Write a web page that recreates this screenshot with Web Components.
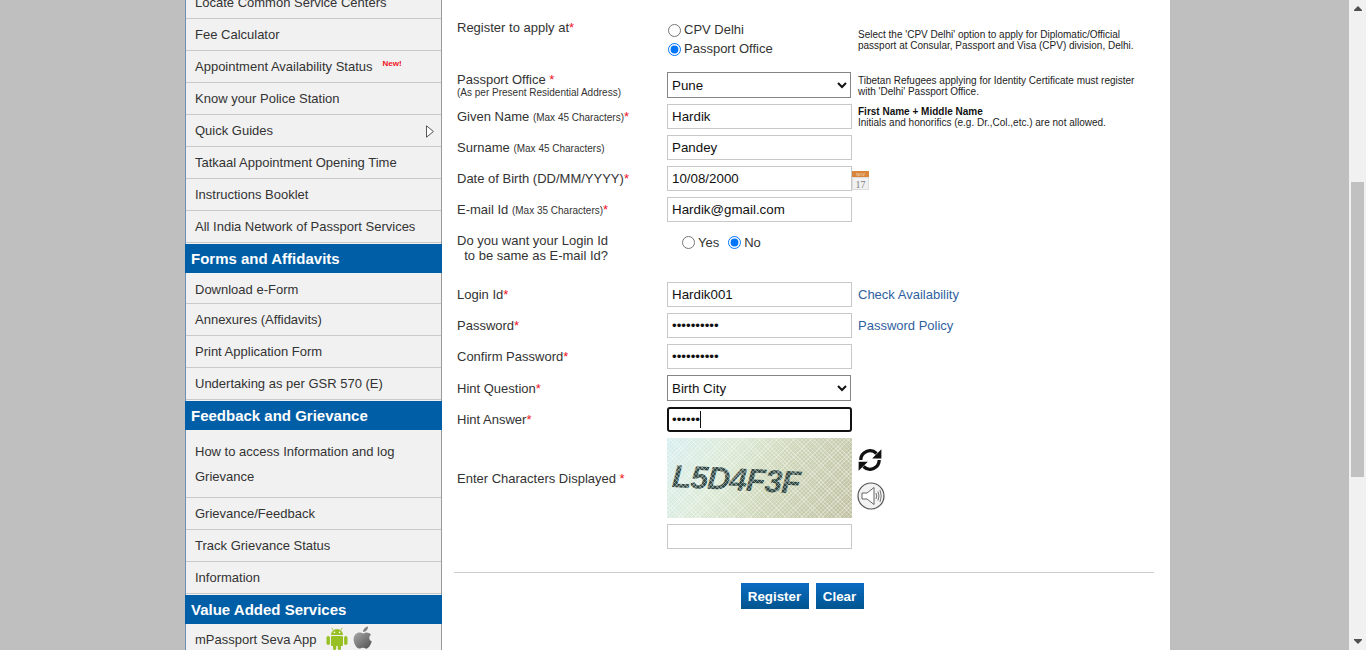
<!DOCTYPE html>
<html>
<head>
<meta charset="utf-8">
<title>Register</title>
<style>
    html, body { margin: 0; height: 650px; overflow: hidden; background: #bfbfbf; }
    body { display: flex; font-family: "Liberation Sans", Arial, sans-serif; }
</style>
</head>
<body>
<portal-page>
    <side-menu slot="side">
        <menu-row>Locate Common Service Centers</menu-row>
        <menu-row>Fee Calculator</menu-row>
        <menu-row new>Appointment Availability Status</menu-row>
        <menu-row>Know your Police Station</menu-row>
        <menu-row arrow>Quick Guides</menu-row>
        <menu-row>Tatkaal Appointment Opening Time</menu-row>
        <menu-row>Instructions Booklet</menu-row>
        <menu-row>All India Network of Passport Services</menu-row>
        <menu-head>Forms and Affidavits</menu-head>
        <menu-row style="--h:30px;--pt:4px">Download e-Form</menu-row>
        <menu-row>Annexures (Affidavits)</menu-row>
        <menu-row>Print Application Form</menu-row>
        <menu-row>Undertaking as per GSR 570 (E)</menu-row>
        <menu-head>Feedback and Grievance</menu-head>
        <menu-row tall>How to access Information and log Grievance</menu-row>
        <menu-row>Grievance/Feedback</menu-row>
        <menu-row>Track Grievance Status</menu-row>
        <menu-row>Information</menu-row>
        <menu-head>Value Added Services</menu-head>
        <menu-row apps>mPassport Seva App</menu-row>
    </side-menu>
    <register-form slot="main"></register-form>
</portal-page>
<page-scrollbar></page-scrollbar>

<script>
class PortalPage extends HTMLElement {
    constructor() {
        super();
        this.attachShadow({ mode: 'open' });
        this.shadowRoot.innerHTML = `
            <style>
                :host { display: flex; width: 1349px; height: 650px; overflow: hidden; }
                .wrap {
                    display: flex;
                    width: 985px;
                    height: 650px;
                    margin-left: 185px;
                    background: #fff;
                    overflow: hidden;
                }
            </style>
            <div class="wrap"><slot name="side"></slot><slot name="main"></slot></div>`;
    }
}

class SideMenu extends HTMLElement {
    constructor() {
        super();
        this.attachShadow({ mode: 'open' });
        this.shadowRoot.innerHTML = `
            <style>
                :host {
                    display: block;
                    box-sizing: border-box;
                    flex: none;
                    width: 257px;
                    height: 700px;
                    margin-top: -13px;
                    background: #f1f1f1;
                    border-left: 1px solid #6f8fb5;
                    border-right: 1px solid #999;
                    font: 13px/18px "Liberation Sans", Arial, sans-serif;
                    color: #333;
                }
            </style>
            <slot></slot>`;
    }
}

class MenuRow extends HTMLElement {
    constructor() {
        super();
        this.attachShadow({ mode: 'open' });
    }

    connectedCallback() {
        const tall = this.hasAttribute('tall');
        const badge = this.hasAttribute('new') ? '<span class="new">New!</span>' : '';
        const arrow = this.hasAttribute('arrow')
            ? '<svg class="arrow" width="8" height="13" viewBox="0 0 8 13"><path d="M.5 .8 L7.400 6.500 L.5 12.200 Z" fill="#fff" stroke="#555"/></svg>' : '';
        const apps = this.hasAttribute('apps') ? `
            <svg class="app" style="margin-left:10px" width="22" height="24" viewBox="0 0 22 24">
                <g fill="#97c024">
                    <path d="M5 9 a6 6 0 0 1 12 0 Z"/>
                    <rect x="5" y="10" width="12" height="10" rx="1"/>
                    <rect x="0.5" y="10" width="3.4" height="9" rx="1.7"/>
                    <rect x="18.1" y="10" width="3.4" height="9" rx="1.7"/>
                    <rect x="7" y="18" width="3.2" height="6" rx="1.6"/>
                    <rect x="11.8" y="18" width="3.2" height="6" rx="1.6"/>
                </g>
                <path d="M7 4 L5.8 1.8 M15 4 L16.2 1.8" stroke="#97c024" stroke-width=".8"/>
                <circle cx="8.4" cy="6.4" r=".8" fill="#fff"/><circle cx="13.6" cy="6.4" r=".8" fill="#fff"/>
            </svg>
            <svg class="app" style="margin-left:3px" width="24" height="24" viewBox="0 0 24 24">
                <defs><linearGradient id="ap" x1="0" y1="0" x2="1" y2="1"><stop offset="0" stop-color="#a8a8a8"/><stop offset="1" stop-color="#4f4f4f"/></linearGradient></defs>
                <path fill="url(#ap)" d="M12.500 7.500 C14.500 6 18 6 20 8.800 C17.600 10.400 17.600 14 20.800 15.400 C19.600 19 17.200 23 14.800 22.600 C13.600 22.400 12.800 21.800 11.600 21.800 C10.400 21.800 9.400 22.600 8.200 22.600 C5.600 22.600 2.600 17.600 2.600 13.600 C2.600 8.600 6.400 6 9.400 6.600 C10.800 6.900 11.400 7.500 12.500 7.500 Z"/>
                <path fill="#7d7d7d" d="M12 6 C12 3.400 14.400 1 17 .6 C17.200 3.400 14.800 6 12 6 Z"/>
            </svg>` : '';
        const height = tall ? '67px' : 'var(--h, 31px)';
        this.shadowRoot.innerHTML = `
            <style>
                :host {
                    display: block;
                    border-bottom: 1px solid #c9c9c9;
                }
                :host(:last-child) { border-bottom: 0; }
                .row {
                    display: flex;
                    align-items: ${tall ? 'flex-start' : 'center'};
                    position: relative;
                    height: ${height};
                    padding: ${tall ? '9px 30px 0 9px' : 'var(--pt, 0) 9px 0'};
                    box-sizing: border-box;
                    font-size: 13px;
                    line-height: ${tall ? '25px' : '18px'};
                    color: #333;
                    white-space: ${tall ? 'normal' : 'nowrap'};
                }
                .new {
                    align-self: flex-start;
                    margin: 7px 0 0 10px;
                    font-size: 8px;
                    line-height: 11px;
                    font-weight: bold;
                    color: #f0131e;
                }
                .arrow { position: absolute; right: 7px; top: 10px; }
                .app { flex: none; margin-top: -4px; }
            </style>
            <div class="row"><slot></slot>${badge}${arrow}${apps}</div>`;
    }
}

class MenuHead extends HTMLElement {
    constructor() {
        super();
        this.attachShadow({ mode: 'open' });
        this.shadowRoot.innerHTML = `
            <style>
                :host {
                    display: flex;
                    align-items: center;
                    box-sizing: border-box;
                    height: 29px;
                    margin: 1px -1px 0 -1px;
                    padding-left: 6px;
                    background: #005ea6;
                    color: #fff;
                    font-size: 15px;
                    font-weight: bold;
                }
            </style>
            <slot></slot>`;
    }
}

class PageScrollbar extends HTMLElement {
    constructor() {
        super();
        this.attachShadow({ mode: 'open' });
        this.shadowRoot.innerHTML = `
            <style>
                :host {
                    display: flex;
                    flex-direction: column;
                    align-items: center;
                    justify-content: space-between;
                    flex: none;
                    width: 17px;
                    height: 650px;
                    background: #f1f1f1;
                }
                .track { flex: 1; width: 100%; display: flex; flex-direction: column; align-items: center; }
                .thumb { width: 13px; height: 295px; margin-top: 165px; background: #c1c1c1; }
                svg { display: block; flex: none; margin: 6px 0; }
            </style>
            <svg width="8" height="5" viewBox="0 0 8 5"><path d="M4 0 L8 4 L8 5 L0 5 L0 4 Z" fill="#505050"/></svg>
            <div class="track"><div class="thumb"></div></div>
            <svg width="8" height="5" viewBox="0 0 8 5"><path d="M0 0 L8 0 L8 1 L4 5 L0 1 Z" fill="#505050"/></svg>`;
    }
}

class FormRow extends HTMLElement {
    constructor() {
        super();
        this.attachShadow({ mode: 'open' });
        this.shadowRoot.innerHTML = `
            <style>
                :host {
                    display: grid;
                    grid-template-columns: 210px 191px 1fr;
                    align-items: center;
                    font: 13px/15px "Liberation Sans", Arial, sans-serif;
                    color: #333;
                }
                ::slotted([slot=note]) { align-self: start; }
            </style>
            <div><slot name="label"></slot></div>
            <div style="display:flex;align-items:center"><slot></slot></div>
            <div><slot name="note"></slot></div>`;
    }
}

class RegisterForm extends HTMLElement {
    constructor() {
        super();
        this.attachShadow({ mode: 'open' });
        const req = '<span class="req">*</span>';
        const input = (value, type, extra) =>
            `<input class="${extra || ''}" type="${type || 'text'}" value="${value}" tabindex="-1">`;
        this.shadowRoot.innerHTML = `
            <style>
                :host {
                    display: block;
                    flex: 1;
                    box-sizing: border-box;
                    padding: 14px 16px 0 15px;
                    font: 13px/15px "Liberation Sans", Arial, sans-serif;
                    color: #333;
                }
                .rows { display: flex; flex-direction: column; gap: 6px; width: 697px; }
                .req { color: #f0131e; }
                small { font-size: 10px; }
                .hint { display: block; font-size: 10px; line-height: 11px; }
                input[type=text], input[type=password], select {
                    box-sizing: border-box;
                    font: 13.33px "Liberation Sans", Arial, sans-serif;
                    color: #111;
                    background: #fff;
                    margin: 0;
                }
                input[type=text], input[type=password] {
                    width: 185px;
                    height: 25px;
                    padding: 0 4px;
                    border: 1px solid #c8c8c8;
                }
                select {
                    width: 184px;
                    height: 26px;
                    padding: 0;
                    border: 1px solid #858585;
                }
                .active { border: 2px solid #111 !important; border-radius: 3px; outline: 0; padding-left: 3px !important; }
                .field { position: relative; display: block; height: 25px; }
                .caret { position: absolute; left: 33px; top: 4px; width: 1px; height: 17px; background: #111; }
                input[type=radio] { margin: 0 3px 0 0; width: 13px; height: 13px; accent-color: #0075ff; }
                .opts { display: flex; flex-direction: column; gap: 3px; line-height: 16px; }
                .opts input[type=radio] { margin-left: 1px; }
                .opts label, .inline label { display: flex; align-items: center; }
                .inline { display: flex; gap: 9px; margin: -19px 0 0 15px; }
                .note { font-size: 10px; line-height: 11px; color: #222; }
                .note b { color: #111; }
                a { color: #305f9f; text-decoration: none; font-size: 13px; }
                .first { height: 52px; align-items: start; }
                .login { height: 48px; }
                .cap { display: flex; align-items: flex-start; gap: 5px; }
                .captcha {
                    flex: none;
                    position: relative;
                    width: 185px;
                    height: 80px;
                    overflow: hidden;
                    background: linear-gradient(118deg, #d6eef0 0%, #dbead6 30%, #cfd8ba 55%, #bebf9f 100%);
                }
                .captcha::after {
                    content: "";
                    position: absolute;
                    inset: 0;
                    background:
                        repeating-linear-gradient(45deg, rgba(255,255,255,.3) 0 1px, transparent 1px 3px),
                        repeating-linear-gradient(-45deg, rgba(255,255,255,.3) 0 1px, transparent 1px 3px);
                }
                .captcha span {
                    position: absolute;
                    left: 5px;
                    top: 21px;
                    font: italic bold 32px/34px "Liberation Sans", Arial, sans-serif;
                    letter-spacing: -1px;
                    color: #2f4743;
                    transform: rotate(3deg);
                    transform-origin: left center;
                    white-space: nowrap;
                }
                .icons { display: flex; flex-direction: column; gap: 9px; padding-top: 9px; }
                .icons svg { display: block; }
                hr { border: 0; border-top: 1px solid #ccc; margin: 23px 0 10px -3px; width: 700px; }
                .btns { display: flex; justify-content: center; gap: 7px; margin-left: -5px; width: 700px; }
                button {
                    height: 26px;
                    padding: 0;
                    border: 0;
                    background: linear-gradient(#0c6cc2, #00558f);
                    color: #fff;
                    font: bold 13.33px "Liberation Sans", Arial, sans-serif;
                }
            </style>
            <div class="rows">
                <form-row class="first">
                    <span slot="label" style="display:block;margin-top:6px">Register to apply at${req}</span>
                    <div class="opts" style="margin-top:8px">
                        <label><input type="radio" name="at" tabindex="-1">CPV Delhi</label>
                        <label><input type="radio" name="at" checked tabindex="-1">Passport Office</label>
                    </div>
                    <div slot="note" class="note" style="margin-top:15px">Select the 'CPV Delhi' option to apply for Diplomatic/Official<br>passport at Consular, Passport and Visa (CPV) division, Delhi.</div>
                </form-row>
                <form-row>
                    <span slot="label">Passport Office ${req}<span class="hint">(As per Present Residential Address)</span></span>
                    <select tabindex="-1"><option>Pune</option></select>
                    <div slot="note" class="note" style="margin-top:1px">Tibetan Refugees applying for Identity Certificate must register<br>with 'Delhi' Passport Office.</div>
                </form-row>
                <form-row>
                    <span slot="label">Given Name <small>(Max 45 Characters)</small>${req}</span>
                    ${input('Hardik')}
                    <div slot="note" class="note"><b>First Name + Middle Name</b><br>Initials and honorifics (e.g. Dr.,Col.,etc.) are not allowed.</div>
                </form-row>
                <form-row>
                    <span slot="label">Surname <small>(Max 45 Characters)</small></span>
                    ${input('Pandey')}
                </form-row>
                <form-row>
                    <span slot="label">Date of Birth (DD/MM/YYYY)${req}</span>
                    ${input('10/08/2000')}
                    <svg slot="note" width="18" height="19" viewBox="0 0 18 19" style="display:block;margin:4px 0 0 -6px">
                        <rect x="0" y="0" width="17" height="7" fill="#d9853b"/>
                        <text x="8.500" y="4.500" text-anchor="middle" font-family="Liberation Sans" font-size="4" fill="#f6e3cf">NOV</text>
                        <rect x=".5" y="6.500" width="16" height="12" fill="#f1f1f1" stroke="#ddd"/>
                        <text x="8.500" y="16.500" text-anchor="middle" font-family="Liberation Serif" font-size="10" fill="#808080">17</text>
                    </svg>
                </form-row>
                <form-row>
                    <span slot="label">E-mail Id <small>(Max 35 Characters)</small>${req}</span>
                    ${input('Hardik@gmail.com')}
                </form-row>
                <form-row class="login">
                    <span slot="label" style="display:block;margin-top:-8px">Do you want your Login Id<br>&nbsp;&nbsp;to be same as E-mail Id?</span>
                    <div class="inline">
                        <label><input type="radio" name="same" tabindex="-1">Yes</label>
                        <label><input type="radio" name="same" checked tabindex="-1">No</label>
                    </div>
                </form-row>
                <form-row>
                    <span slot="label">Login Id${req}</span>
                    ${input('Hardik001')}
                    <a slot="note" style="align-self:center" href="#">Check Availability</a>
                </form-row>
                <form-row>
                    <span slot="label">Password${req}</span>
                    ${input('1234567890', 'password')}
                    <a slot="note" style="align-self:center" href="#">Password Policy</a>
                </form-row>
                <form-row>
                    <span slot="label">Confirm Password${req}</span>
                    ${input('1234567890', 'password')}
                </form-row>
                <form-row>
                    <span slot="label">Hint Question${req}</span>
                    <select tabindex="-1"><option>Birth City</option></select>
                </form-row>
                <form-row>
                    <span slot="label">Hint Answer${req}</span>
                    <span class="field">${input('123456', 'password', 'active')}<span class="caret"></span></span>
                </form-row>
                <form-row>
                    <span slot="label">Enter Characters Displayed ${req}</span>
                    <div class="cap">
                        <div class="captcha"><span>L5D4F3F</span></div>
                        <div class="icons">
                            <svg width="26" height="26" viewBox="0 0 24 24">
                                <path d="M3.500 12 A8.500 8.500 0 0 1 18 6 M20.500 12 A8.500 8.500 0 0 1 6 18" fill="none" stroke="#111" stroke-width="3"/>
                                <path d="M22.500 2 V10.500 H14 Z M1.500 22 V13.500 H10 Z" fill="#111"/>
                            </svg>
                            <svg width="28" height="28" viewBox="0 0 28 28">
                                <circle cx="14" cy="14" r="13" fill="#f2f2f2" stroke="#555" stroke-width="1.200"/>
                                <path d="M5 11 H10 L17 5.500 V22.500 L10 17 H5 Z" fill="#fff" stroke="#666"/>
                                <path d="M19 11 Q20.500 14 19 17 M21 9.500 Q23 14 21 18.500 M23 8 Q25.500 14 23 20" fill="none" stroke="#777"/>
                            </svg>
                        </div>
                    </div>
                </form-row>
                <form-row>
                    <span slot="label"></span>
                    ${input('')}
                </form-row>
            </div>
            <hr>
            <div class="btns">
                <button style="width:68px" tabindex="-1">Register</button>
                <button style="width:48px" tabindex="-1">Clear</button>
            </div>`;
    }
}

customElements.define('portal-page', PortalPage);
customElements.define('side-menu', SideMenu);
customElements.define('menu-row', MenuRow);
customElements.define('menu-head', MenuHead);
customElements.define('page-scrollbar', PageScrollbar);
customElements.define('form-row', FormRow);
customElements.define('register-form', RegisterForm);
</script>
</body>
</html>
